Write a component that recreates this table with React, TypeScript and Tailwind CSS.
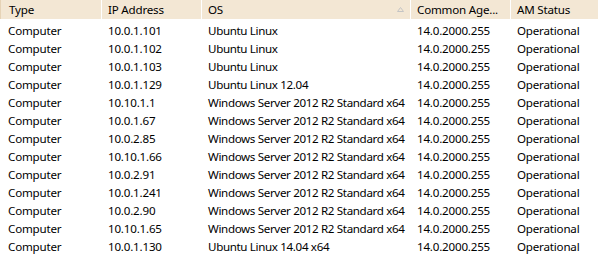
const rows = [
  ["Computer", "10.0.1.101", "Ubuntu Linux", "14.0.2000.255", "Operational"],
  ["Computer", "10.0.1.102", "Ubuntu Linux", "14.0.2000.255", "Operational"],
  ["Computer", "10.0.1.103", "Ubuntu Linux", "14.0.2000.255", "Operational"],
  ["Computer", "10.0.1.129", "Ubuntu Linux 12.04", "14.0.2000.255", "Operational"],
  ["Computer", "10.10.1.1", "Windows Server 2012 R2 Standard x64", "14.0.2000.255", "Operational"],
  ["Computer", "10.0.1.67", "Windows Server 2012 R2 Standard x64", "14.0.2000.255", "Operational"],
  ["Computer", "10.0.2.85", "Windows Server 2012 R2 Standard x64", "14.0.2000.255", "Operational"],
  ["Computer", "10.10.1.66", "Windows Server 2012 R2 Standard x64", "14.0.2000.255", "Operational"],
  ["Computer", "10.0.2.91", "Windows Server 2012 R2 Standard x64", "14.0.2000.255", "Operational"],
  ["Computer", "10.0.1.241", "Windows Server 2012 R2 Standard x64", "14.0.2000.255", "Operational"],
  ["Computer", "10.0.2.90", "Windows Server 2012 R2 Standard x64", "14.0.2000.255", "Operational"],
  ["Computer", "10.10.1.65", "Windows Server 2012 R2 Standard x64", "14.0.2000.255", "Operational"],
  ["Computer", "10.0.1.130", "Ubuntu Linux 14.04 x64", "14.0.2000.255", "Operational"],
];

const cols = "grid grid-cols-[101px_100px_209px_100px_1fr]";

function SortArrow() {
  return (
    <svg width="7" height="5" viewBox="0 0 7 5" className="absolute right-[6px] top-[7px]">
      <path d="M3.5 0.5 L6.5 4.5 L0.5 4.5 Z" fill="none" stroke="#c4c4c4" strokeWidth="1" />
    </svg>
  );
}

export default function App() {
  return (
    <div
      className="w-[598px] h-[257px] bg-white text-black overflow-hidden text-[11.6px] tracking-[-0.2px]"
      style={{ fontFamily: '"Noto Sans", "Open Sans", sans-serif' }}
    >
      <div className={`${cols} h-[19px] bg-[#f3e7d4] leading-[19px]`}>
        <div className="pl-[8px] border-l border-[#e6d3b6]">Type</div>
        <div className="pl-[6px] border-l border-white">IP Address</div>
        <div className="relative pl-[6px] border-l border-white">
          OS
          <SortArrow />
        </div>
        <div className="pl-[6px] border-l border-white whitespace-nowrap">Common Age...</div>
        <div className="pl-[6px] border-l border-white">AM Status</div>
      </div>
      <div className="pt-[3px]">
        {rows.map((r, i) => (
          <div key={i} className={`${cols} h-[18px] leading-[18px]`}>
            <div className="pl-[8px]">{r[0]}</div>
            <div className="pl-[7px]">{r[1]}</div>
            <div className="pl-[7px] whitespace-nowrap tracking-[-0.35px]">{r[2]}</div>
            <div className="pl-[7px]">{r[3]}</div>
            <div className="pl-[7px]">{r[4]}</div>
          </div>
        ))}
      </div>
    </div>
  );
}
